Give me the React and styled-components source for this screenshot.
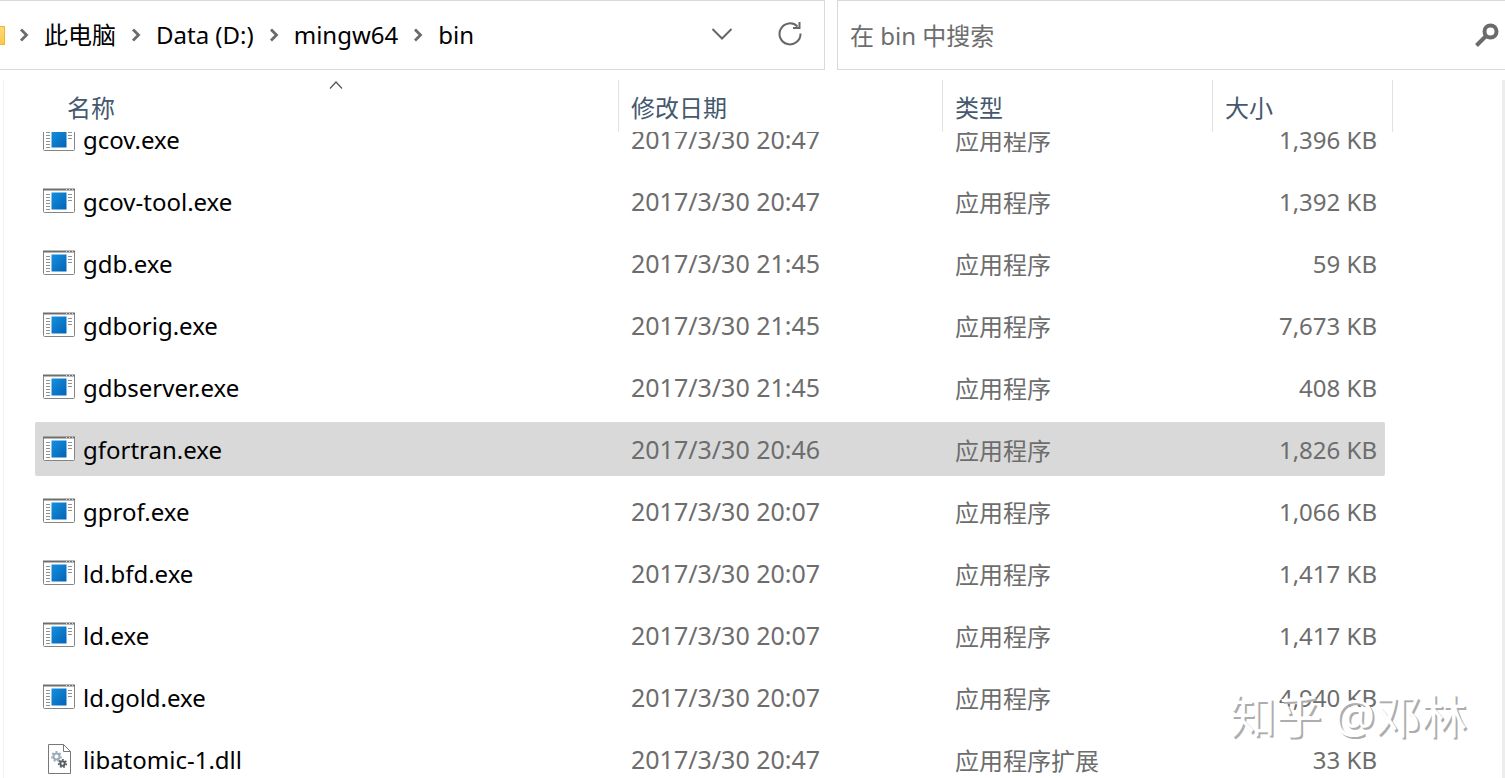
import React from 'react';
import styled, { createGlobalStyle } from 'styled-components';

const files = [
  { name: 'gcov.exe', date: '2017/3/30 20:47', type: '应用程序', size: '1,396 KB' },
  { name: 'gcov-tool.exe', date: '2017/3/30 20:47', type: '应用程序', size: '1,392 KB' },
  { name: 'gdb.exe', date: '2017/3/30 21:45', type: '应用程序', size: '59 KB' },
  { name: 'gdborig.exe', date: '2017/3/30 21:45', type: '应用程序', size: '7,673 KB' },
  { name: 'gdbserver.exe', date: '2017/3/30 21:45', type: '应用程序', size: '408 KB' },
  { name: 'gfortran.exe', date: '2017/3/30 20:46', type: '应用程序', size: '1,826 KB', selected: true },
  { name: 'gprof.exe', date: '2017/3/30 20:07', type: '应用程序', size: '1,066 KB' },
  { name: 'ld.bfd.exe', date: '2017/3/30 20:07', type: '应用程序', size: '1,417 KB' },
  { name: 'ld.exe', date: '2017/3/30 20:07', type: '应用程序', size: '1,417 KB' },
  { name: 'ld.gold.exe', date: '2017/3/30 20:07', type: '应用程序', size: '4,940 KB' },
  { name: 'libatomic-1.dll', date: '2017/3/30 20:47', type: '应用程序扩展', size: '33 KB' },
];

const path = ['此电脑', 'Data (D:)', 'mingw64', 'bin'];

const GlobalStyle = createGlobalStyle`
  * {
    box-sizing: border-box;
  }

  body {
    margin: 0;
    background: #fff;
    font-family: 'Noto Sans', 'Noto Sans CJK SC', sans-serif;
    font-size: 24px;
    color: #000;
  }
`;

const Window = styled.div`
  position: relative;
  display: flex;
  flex-direction: column;
  height: 100vh;
  overflow: hidden;
`;

const Toolbar = styled.div`
  display: flex;
  flex: none;
  gap: 12px;
  height: 70px;
`;

const AddressBar = styled.nav`
  display: flex;
  flex: 825 1 0;
  align-items: center;
  min-width: 0;
  padding-right: 20px;
  border: 1px solid #d9d9d9;
  border-left: 0;
`;

const FolderEdge = styled.span`
  width: 5px;
  height: 19px;
  background: linear-gradient(#ffd977, #fcc94a);
  border: 1px solid #e9b93c;
  border-left: 0;
`;

const Crumbs = styled.ol`
  display: flex;
  flex: 1;
  margin: 0;
  padding: 0;
  list-style: none;
`;

const Crumb = styled.li`
  display: flex;
  align-items: center;

  svg {
    margin: 0 15px;
  }

  &:first-child svg {
    margin-left: 14px;
  }

  a {
    color: #000;
    line-height: 36px;
    text-decoration: none;
    white-space: nowrap;
  }
`;

const IconButton = styled.button`
  display: flex;
  align-items: center;
  justify-content: center;
  width: 28px;
  height: 32px;
  margin-left: ${(props) => props.$gap || 0}px;
  padding: 0;
  background: none;
  border: 0;
`;

const SearchBox = styled.form`
  display: flex;
  flex: 668 1 0;
  align-items: center;
  min-width: 0;
  padding: 0 4px 0 12px;
  border: 1px solid #d9d9d9;
  border-right: 0;
`;

const SearchInput = styled.input`
  flex: 1;
  min-width: 0;
  padding: 0;
  background: none;
  border: 0;
  outline: 0;
  font: inherit;

  &::placeholder {
    color: #6d6d6d;
    opacity: 1;
  }
`;

const Pane = styled.main`
  flex: 1;
  min-height: 0;
  margin: 10px 0 0 3px;
  padding: 0 109px 0 31px;
  overflow: hidden;
  border-left: 1px solid #f3f3f3;
  border-right: 3px solid #ededed;
`;

const FileTable = styled.table`
  display: block;
`;

const TableHead = styled.thead`
  display: block;
  position: relative;
  z-index: 1;
  background: #fff;
`;

const HeadRow = styled.tr`
  display: grid;
  grid-template-columns: minmax(0, 1fr) 324px 270px 180px;
  grid-template-rows: 52px;
`;

const HeadCell = styled.th`
  display: flex;
  justify-content: space-between;
  padding: ${(props) => (props.$first ? '0 0 0 32px' : '0 0 0 12px')};
  border-right: 1px solid #e2e2e2;
  color: #44586e;
  font-weight: 400;
  line-height: 56px;
  text-align: left;
`;

const SortMark = styled.svg`
  flex: none;
  margin-right: 275px;
`;

// The list is scrolled a little, so its first row slides under the header.
const TableBody = styled.tbody`
  display: flex;
  flex-direction: column;
  gap: 8px;
  margin-top: -20px;
`;

const FileRow = styled.tr`
  display: grid;
  grid-template-columns: minmax(0, 1fr) 324px 270px 172px;
  grid-template-rows: 54px;
  margin-right: 8px;
  background: ${(props) => (props.$selected ? '#d9d9d9' : 'transparent')};
  border-radius: 2px;
`;

const Cell = styled.td`
  padding: 0 8px 0 12px;
  color: #6d6d6d;
  font-size: 24px;
  line-height: 56px;
  white-space: nowrap;
`;

const NameCell = styled(Cell)`
  display: flex;
  align-items: flex-start;
  gap: 8px;
  padding: 0 8px;
  color: #000;

  svg {
    flex: none;
    height: 54px;
  }
`;

const DateCell = styled(Cell)`
  font-size: 25px;
  line-height: 54px;
`;

const TypeCell = styled(Cell)`
  line-height: 58px;
`;

const SizeCell = styled(Cell)`
  text-align: right;
`;

const Watermark = styled.div`
  position: absolute;
  right: 38px;
  bottom: 33px;
  z-index: 2;
  color: #fff;
  font-size: 46px;
  line-height: 60px;
  text-shadow: 2px 2px 0 #adadad;
`;

function Separator() {
  return (
    <svg width="10" height="14" viewBox="0 0 10 14" aria-hidden="true">
      <path d="M2 1.5 7.5 7 2 12.5" fill="none" stroke="#6b6b6b" strokeWidth="2.8" />
    </svg>
  );
}

function ExeIcon() {
  return (
    <svg width="32" height="26" viewBox="0 0 32 26" aria-hidden="true">
      <defs>
        <linearGradient id="exe" x1="0" y1="0" x2="1" y2="1">
          <stop offset="0" stopColor="#1490df" />
          <stop offset="1" stopColor="#0563b5" />
        </linearGradient>
      </defs>
      <rect x="0.5" y="1.5" width="31" height="23" rx="1" fill="#fff" stroke="#858585" />
      <path d="M0 1.5h32" stroke="#6e6e6e" strokeWidth="2" />
      <path d="M23 1.5h7" stroke="#d5d5d5" strokeDasharray="1 2" />
      <rect x="8.5" y="4.5" width="15" height="17" fill="url(#exe)" />
      <path
        d="M3 6.5h4M3 9.5h4M3 12.5h4M3 15.5h4M3 18.5h4M3 21.5h4M25 6.5h4M25 9.5h4M25 12.5h4"
        stroke="#929292"
      />
    </svg>
  );
}

function Gear({ x, y, r, color }) {
  const teeth = ((r + 2) * Math.PI) / 8;

  return (
    <g transform={`translate(${x} ${y})`} fill="none" stroke={color}>
      <circle r={r} strokeWidth="2" />
      <circle r={r + 1.5} strokeWidth="1.8" strokeDasharray={teeth} />
    </g>
  );
}

function DllIcon() {
  return (
    <svg width="32" height="32" viewBox="0 0 32 32" aria-hidden="true">
      <path d="M5.5 1.5H20.5L27.5 8.5V30.5H5.5Z" fill="#fff" stroke="#777" />
      <path d="M20.5 1.5V8.5H27.5" fill="none" stroke="#777" />
      <Gear x={13.5} y={13.5} r={3} color="#9eabb8" />
      <Gear x={19.5} y={20.5} r={2.2} color="#565e66" />
    </svg>
  );
}

function App() {
  return (
    <>
      <GlobalStyle />
      <Window>
        <Toolbar>
          <AddressBar aria-label="地址">
            <FolderEdge />
            <Crumbs>
              {path.map((item) => (
                <Crumb key={item}>
                  <Separator />
                  <a href="#path">{item}</a>
                </Crumb>
              ))}
            </Crumbs>
            <IconButton type="button" aria-label="历史记录">
              <svg width="22" height="14" viewBox="0 0 22 14">
                <path d="M1.5 1 11 10.5 20.5 1" fill="none" stroke="#666" strokeWidth="2" />
              </svg>
            </IconButton>
            <IconButton type="button" aria-label="刷新" $gap={40}>
              <svg width="26" height="28" viewBox="0 0 26 28">
                <path
                  d="M23.5 12.5A10.5 10.5 0 1 1 20.5 5.5M22.5 1V7H16"
                  fill="none"
                  stroke="#666"
                  strokeWidth="2"
                />
              </svg>
            </IconButton>
          </AddressBar>
          <SearchBox>
            <SearchInput type="text" placeholder="在 bin 中搜索" aria-label="在 bin 中搜索" />
            <IconButton type="button" aria-label="搜索">
              <svg width="26" height="26" viewBox="0 0 26 26">
                <circle cx="16.5" cy="9.5" r="6" fill="none" stroke="#6b6b6b" strokeWidth="4" />
                <path d="M12 14 2.5 23.5" stroke="#6b6b6b" strokeWidth="4" />
              </svg>
            </IconButton>
          </SearchBox>
        </Toolbar>
        <Pane>
          <FileTable>
            <TableHead>
              <HeadRow>
                <HeadCell scope="col" $first>
                  名称
                  <SortMark width="14" height="10" viewBox="0 0 14 10" aria-hidden="true">
                    <path d="M1 8.5 7 2 13 8.5" fill="none" stroke="#555" strokeWidth="1.2" />
                  </SortMark>
                </HeadCell>
                <HeadCell scope="col">修改日期</HeadCell>
                <HeadCell scope="col">类型</HeadCell>
                <HeadCell scope="col">大小</HeadCell>
              </HeadRow>
            </TableHead>
            <TableBody>
              {files.map((file) => (
                <FileRow key={file.name} $selected={file.selected}>
                  <NameCell>
                    {file.name.endsWith('.dll') ? <DllIcon /> : <ExeIcon />}
                    {file.name}
                  </NameCell>
                  <DateCell>{file.date}</DateCell>
                  <TypeCell>{file.type}</TypeCell>
                  <SizeCell>{file.size}</SizeCell>
                </FileRow>
              ))}
            </TableBody>
          </FileTable>
        </Pane>
        <Watermark>知乎 @邓林</Watermark>
      </Window>
    </>
  );
}

export default App;
